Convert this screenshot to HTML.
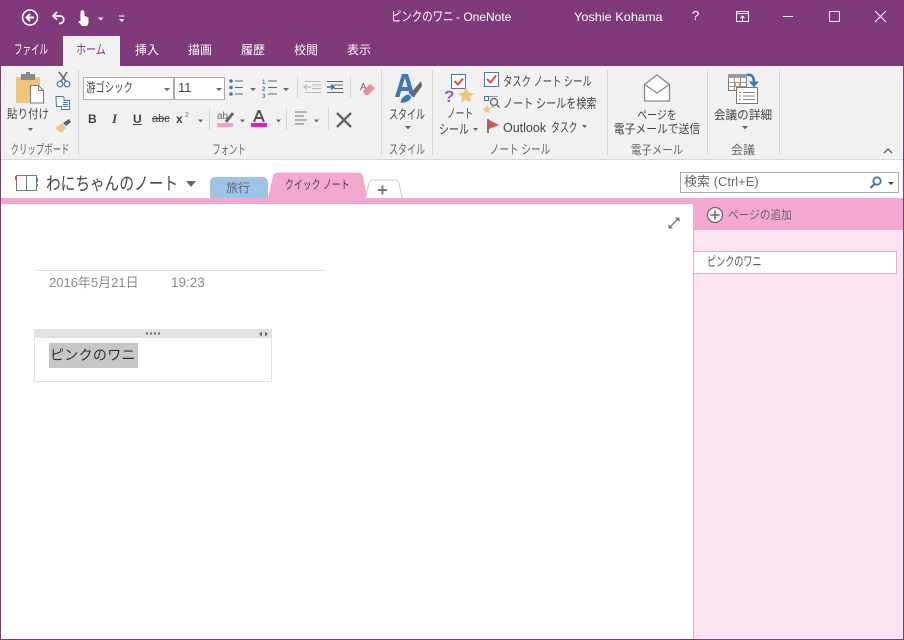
<!DOCTYPE html>
<html lang="ja"><head><meta charset="utf-8"><title>ピンクのワニ - OneNote</title>
<style>
html,body{margin:0;padding:0}
body{width:904px;height:640px;position:relative;overflow:hidden;background:#fff;font-family:"Liberation Sans","Noto Sans CJK JP",sans-serif;font-size:12px;color:#444}
.a,.t,svg{position:absolute}
.t{white-space:nowrap;line-height:16px;transform-origin:0 50%;transform:scaleX(var(--s,1))}
.c{transform-origin:50% 50%;transform:translateX(-50%) scaleX(var(--s,1))}
.w{color:#fff}
.g{color:#666}
.sep{position:absolute;width:1px;background:#d4d4d4}
.box{position:absolute;background:#fff;border:1px solid #ababab;box-sizing:border-box}
</style></head><body>
<div class="a" style="left:0;top:0;width:904px;height:66px;background:#80397b"></div>
<div class="a" style="left:1px;top:66px;width:902px;height:93px;background:#f1f1f1"></div>
<div class="a" style="left:1px;top:159px;width:902px;height:1px;background:#d6d6d6"></div>
<div class="a" style="left:63px;top:36px;width:57px;height:30px;background:#f1f1f1"></div>

<!-- QAT -->
<svg style="left:20px;top:8px" width="110" height="20" fill="none" stroke="#fff">
<circle cx="10" cy="9.500" r="7.500" stroke-width="1.500"/><path d="M14 9.500H6.500M10 6 6.500 9.500 10 13" stroke-width="2"/>
<path d="M37 4 33 8l4 3.500M33.500 8H40c5 0 5 7 0 7.500h-1" stroke-width="1.700"/>
<path d="M60.500 11V4.500c0-3 4-3 4 0V8l4 1.500V15l-1.500 3H62l-4-4.500 2.500-.5z" fill="#fff" stroke="none"/>
<path d="M78 9.500h5.500l-2.700 3zM99 11h5.500l-2.700 3z" fill="#fff" stroke="none"/><path d="M99 8h5.500" stroke-width="1"/>
</svg>
<div class="t w" style="left:391px;top:9px;font-size:13px;--s:.8">ピンクのワニ</div>
<div class="t w" style="left:456px;top:9px;font-size:12px">- OneNote</div>
<div class="t w" style="left:574px;top:9px;--s:1.06">Yoshie Kohama</div>
<div class="t w" style="left:692px;top:8px;font-size:13px">?</div>
<svg style="left:730px;top:8px" width="160" height="20" fill="none" stroke="#fff" stroke-width="1">
<path d="M6.500 3.500h12v10h-12zM6.500 5.500h12M12.500 13V8M10.500 10l2-2 2 2"/>
<path d="M53 8.500h10"/><path d="M99.500 3.500h10v10h-10z"/><path d="M145 3l11 11M156 3 145 14"/>
</svg>

<!-- Tabs -->
<div class="t w" style="left:14px;top:42px;font-size:13px;--s:.655">ファイル</div>
<div class="t" style="left:76px;top:42px;color:#80397b;font-size:13px;--s:.77">ホーム</div>
<div class="t w" style="left:135px;top:42px">挿入</div>
<div class="t w" style="left:188px;top:42px">描画</div>
<div class="t w" style="left:241px;top:42px">履歴</div>
<div class="t w" style="left:294px;top:42px">校閲</div>
<div class="t w" style="left:347px;top:42px">表示</div>

<!-- Separators -->
<div class="sep" style="left:78px;top:70px;height:85px"></div>
<div class="sep" style="left:381px;top:70px;height:85px"></div>
<div class="sep" style="left:432px;top:70px;height:85px"></div>
<div class="sep" style="left:607px;top:70px;height:85px"></div>
<div class="sep" style="left:707px;top:70px;height:85px"></div>
<div class="sep" style="left:779px;top:70px;height:85px"></div>
<div class="sep" style="left:297px;top:76px;height:22px"></div>
<div class="sep" style="left:350px;top:76px;height:22px"></div>
<div class="sep" style="left:209px;top:108px;height:22px"></div>
<div class="sep" style="left:286px;top:108px;height:22px"></div>
<div class="sep" style="left:328px;top:108px;height:22px"></div>

<!-- Clipboard -->
<svg style="left:0;top:66px" width="80" height="70">
<rect x="16" y="11" width="24" height="26" rx="1.500" fill="#efc67c"/>
<rect x="21" y="8" width="14" height="6" fill="#8a8a8a"/><rect x="26" y="6" width="4" height="4" fill="#8a8a8a"/>
<path d="M30.500 19.500h8l5 5v12.500h-13z" fill="#fff" stroke="#7a7a7a"/><path d="M38.500 19.500v5h5" fill="none" stroke="#7a7a7a"/>
<path d="M28 62h5l-2.500 3z" fill="#666"/>
<g fill="none" stroke="#4e86bd" stroke-width="1.300"><circle cx="60" cy="18" r="2.800"/><circle cx="67" cy="18" r="2.800"/></g>
<path d="M61 15.500 67 6M66 15.500 59 6" stroke="#666" stroke-width="1.500"/>
<path d="M56 30.500h7l1 1v3h5.500v9h-8v-3h-5z" fill="#fff" stroke="#4a7aa8"/><path d="M63 36.500h5M63 38.500h5M63 40.500h5" stroke="#4a7aa8"/>
<path d="M55 62l7-5 4 5-5 5z" fill="#efc67c"/><path d="M63 57l6-4 2 3-5 4z" fill="#5f5f5f"/>
</svg>
<div class="t c" style="left:28px;top:106px;--s:.875">貼り付け</div>
<div class="t c g" style="left:40px;top:142px;font-size:13px;--s:.645">クリップボード</div>

<!-- Font -->
<div class="box" style="left:83px;top:77px;width:91px;height:23px"></div>
<div class="box" style="left:174px;top:77px;width:51px;height:23px"></div>
<div class="t" style="left:86px;top:80px;font-size:13px;--s:.72">游ゴシック</div>
<div class="t" style="left:178px;top:80px;font-size:13px">11</div>
<svg style="left:83px;top:70px" width="300" height="66">
<path d="M81 18h6l-3 3zM133 18h6l-3 3zM167 18h6l-3 3zM200 18h6l-3 3zM115 49.500h5l-2.500 3zM157 49.500h5l-2.500 3zM193 49.500h5l-2.500 3zM231 49.500h5l-2.500 3z" fill="#666"/>
<g fill="#3f78b3"><circle cx="148" cy="11" r="1.800"/><circle cx="148" cy="17.500" r="1.800"/><circle cx="148" cy="24" r="1.800"/></g>
<path d="M152 11h8M152 17.500h8M152 24h8M185 11h9M185 17.500h9M185 24h9" stroke="#666"/>
<text x="179" y="14" font-size="6" font-weight="bold" fill="#3f78b3">1</text><text x="179" y="21" font-size="6" font-weight="bold" fill="#3f78b3">2</text><text x="179" y="28" font-size="6" font-weight="bold" fill="#3f78b3">3</text>
<path d="M222 11.500h16M229 15h9M229 18.500h9M222 22.500h16" stroke="#bbb"/><path d="M228 17h-6M224 14.500l-3 2.500 3 2.500" fill="none" stroke="#bbb" stroke-width="1.300"/>
<path d="M244 11.500h16M251 15h9M251 18.500h9M244 22.500h16" stroke="#666"/><path d="M244 17h6M248 14.500l3 2.500-3 2.500" fill="none" stroke="#2e6fb0" stroke-width="1.500"/>
<text x="277" y="20" font-size="10" fill="#666">A</text>
<path d="M280 21l7-7 5 4-7 7h-3z" fill="#ed8a9a"/>
<text x="134" y="49" font-size="10" fill="#666">ab</text>
<path d="M143 52l7-9" stroke="#666" stroke-width="3"/>
<rect x="134" y="53" width="16" height="4" fill="#f4a0cf"/>
<rect x="168" y="53" width="16" height="4" fill="#f00fd2"/>
<path d="M171 52 175.500 41h1L181 52M172.500 48h7" fill="none" stroke="#555" stroke-width="2"/>
<path d="M212 42h12M212 46h9M212 50h12M212 54h9" stroke="#777"/>
<path d="M254 43l14 14M268 43 254 57" stroke="#666" stroke-width="2.500"/>
</svg>
<div class="t" style="left:88px;top:111px;font-weight:bold">B</div>
<div class="t" style="left:112px;top:111px;font-style:italic;font-family:'Liberation Serif',serif;font-weight:bold;font-size:13px">I</div>
<div class="t" style="left:133px;top:111px;font-weight:bold;text-decoration:underline">U</div>
<div class="t" style="left:152px;top:111px;font-size:11px;text-decoration:line-through">abc</div>
<div class="t" style="left:176px;top:111px;font-weight:bold">x</div>
<div class="t" style="left:185px;top:108px;font-size:7px;color:#3f78b3">2</div>
<div class="t c g" style="left:229px;top:142px;font-size:13px;--s:.64">フォント</div>

<!-- Style -->
<svg style="left:385px;top:70px" width="45" height="70">
<path d="M10 27 17 4h6l7 23h-5l-1.500-6h-7.500L14.500 27zM17 17h5.500L20 8z" fill="#3f78b3" fill-rule="evenodd"/>
<path d="M25 24 36 11l1 5-8 11z" fill="#666"/>
<path d="M15 33c0-5 5-9 9-9l3 3c-1 4-6 7-12 6z" fill="#3f78b3" stroke="#f1f1f1"/>
</svg>
<div class="t c" style="left:407px;top:107px;font-size:13px;--s:.69">スタイル</div>
<svg style="left:404px;top:125px" width="8" height="6"><path d="M1 1h6L4 4.500z" fill="#666"/></svg>
<div class="t c g" style="left:407px;top:142px;font-size:13px;--s:.69">スタイル</div>

<!-- Note tags -->
<svg style="left:440px;top:70px" width="50" height="38" fill="none">
<rect x="11.500" y="4.500" width="14" height="14" stroke="#3f78b3" fill="#fff"/>
<path d="M14.500 11l3.500 3.500 5-6" stroke="#d9553c" stroke-width="2"/>
<text x="4" y="32" font-size="17" font-weight="bold" fill="#a05cc0" stroke="none" font-family="Liberation Sans">?</text>
<path d="M26 17l2.500 5.500 5.500.7-4 3.800 1 5.500-5-2.800-5 2.800 1-5.500-4-3.800 5.500-.7z" fill="#efc67c"/>
</svg>
<div class="t c" style="left:460px;top:106px;font-size:13px;--s:.665">ノート</div>
<div class="t" style="left:439px;top:122px;font-size:13px;--s:.77">シール</div>
<svg style="left:472px;top:127px" width="8" height="6"><path d="M1 1h5L3.500 4z" fill="#666"/></svg>
<svg style="left:482px;top:70px" width="22" height="68" fill="none">
<rect x="2.500" y="2.500" width="14" height="14" stroke="#3f78b3" fill="#fff"/><path d="M5 9l3.500 3.500 5.500-7" stroke="#d9553c" stroke-width="2"/>
<rect x="2.500" y="26.500" width="4" height="4" stroke="#3f78b3"/>
<path d="M7 26.500h9M9 37h3" stroke="#999"/><circle cx="12" cy="32" r="3.500" stroke="#666" stroke-width="1.300"/><path d="M14.500 34.500l3 3" stroke="#666" stroke-width="1.500"/>
<path d="M5 35l1.500 3 3 .3-2.300 2 .7 3-2.900-1.500-2.900 1.500.7-3-2.300-2 3-.3z" fill="#efc67c"/>
<rect x="5" y="49" width="2" height="14" fill="#777"/><path d="M7 50l10 5-10 4z" fill="#d9553c"/>
</svg>
<div class="t" style="left:503px;top:74px;font-size:13px;--s:.715">タスク ノート シール</div>
<div class="t" style="left:503px;top:96px;font-size:13px;--s:.775">ノート シールを検索</div>
<div class="t" style="left:503px;top:120px;font-size:12.500px">Outlook</div>
<div class="t" style="left:551px;top:120px;font-size:13px;--s:.68">タスク</div>
<svg style="left:581px;top:124px" width="8" height="6"><path d="M1 1h5L3.500 4z" fill="#666"/></svg>
<div class="t c g" style="left:520px;top:142px;font-size:13px;--s:.74">ノート シール</div>

<!-- Email -->
<svg style="left:640px;top:72px" width="36" height="32" fill="none" stroke="#8a8a8a" stroke-width="1.300">
<path d="M4.500 12.500 17 3l12.500 9.500v16.500h-25z" fill="#fff"/><path d="M4.500 12.500 17 21l12.500-8.500"/>
</svg>
<div class="t c" style="left:657px;top:107px;--s:.83">ページを</div>
<div class="t c" style="left:657px;top:121px;--s:.9">電子メールで送信</div>
<div class="t c g" style="left:657px;top:142px;--s:.87">電子メール</div>

<!-- Meeting -->
<svg style="left:726px;top:72px" width="38" height="34" fill="none">
<rect x="2.500" y="2.500" width="18" height="16" fill="#fff" stroke="#777"/><rect x="2" y="2" width="19" height="4" fill="#999"/>
<path d="M2.500 10.500h18M2.500 14.500h18M8.500 6v12M14.500 6v12" stroke="#999"/><rect x="9.500" y="10.500" width="4" height="4" stroke="#e88a30" fill="#fff"/>
<rect x="10.500" y="15.500" width="21" height="16" fill="#fff" stroke="#777"/><path d="M17 20.500h12M17 24h12M17 27.500h12M13 20.500h2M13 24h2M13 27.500h2" stroke="#888"/>
<path d="M21 3c5-1 7 2 7 8" stroke="#3f78b3" stroke-width="2.500"/><path d="M23 9.500l5 6 5-6z" fill="#3f78b3"/>
</svg>
<div class="t c" style="left:743px;top:107px;--s:.97">会議の詳細</div>
<svg style="left:741px;top:125px" width="8" height="6"><path d="M1 1h6L4 4.500z" fill="#666"/></svg>
<div class="t c g" style="left:743px;top:142px">会議</div>
<svg style="left:882px;top:146px" width="12" height="9" fill="none"><path d="M2 7l4-4 4 4" stroke="#666" stroke-width="1.500"/></svg>

<!-- Notebook bar -->
<svg style="left:14px;top:172px" width="26" height="22" fill="none">
<path d="M2.500 3.500h10v15h-10zM12.500 3.500h10v15h-10z" stroke="#777" fill="#fff"/>
<rect x="1" y="4" width="2" height="4" fill="#d9553c"/><rect x="22" y="6" width="2" height="4" fill="#3f78b3"/><rect x="22" y="12" width="2" height="3" fill="#5a9a70"/>
</svg>
<div class="t" style="left:46px;top:173px;font-size:18px;line-height:22px;color:#444;--s:.815">わにちゃんのノート</div>
<svg style="left:185px;top:180px" width="12" height="8"><path d="M1 1h10L6 7z" fill="#666"/></svg>

<div class="a" style="left:210px;top:177px;width:58px;height:21px;background:#9dc3e6;border-radius:5px 5px 0 0"></div>
<div class="t g" style="left:226px;top:180px">旅行</div>
<svg style="left:266px;top:172px" width="140" height="28">
<path d="M2 26 7 4Q8 .5 12 .5H92Q96 .5 97 4L101 26z" fill="#f4a7cf"/>
<path d="M99.500 26 103 11Q104 8 107 8H129Q132 8 133 11L136 26" fill="#fff" stroke="#c9c9c9"/>
<path d="M112 18h9M116.500 13.500v9" stroke="#777" stroke-width="2"/>
</svg>
<div class="t" style="left:285px;top:177px;font-size:12.500px;--s:.71">クイック ノート</div>

<div class="box" style="left:680px;top:172px;width:219px;height:21px"></div>
<div class="t" style="left:684px;top:174px;color:#666;font-size:13px">検索 (Ctrl+E)</div>
<svg style="left:868px;top:175px" width="28" height="16" fill="none">
<circle cx="9" cy="6" r="3.700" stroke="#3f78b3" stroke-width="1.800"/><path d="M6.500 9 2.500 13" stroke="#3f78b3" stroke-width="2.200"/><path d="M20 7h6l-3 3z" fill="#444"/>
</svg>

<!-- Content -->
<div class="a" style="left:0;top:198px;width:904px;height:6px;background:#f4a7cf"></div>
<div class="a" style="left:693px;top:198px;width:210px;height:32px;background:#f4a7cf"></div>
<div class="a" style="left:693px;top:230px;width:210px;height:409px;background:#fbe5f3;border-left:1px solid #e8a8cc;box-sizing:border-box"></div>
<svg style="left:706px;top:206px" width="18" height="18" fill="none">
<circle cx="9" cy="9" r="7.500" fill="#f8f0f5" stroke="#666" stroke-width="1.200"/><path d="M9 4.500v9M4.500 9h9" stroke="#666" stroke-width="1.500"/>
</svg>
<div class="t" style="left:728px;top:207px;color:#666;--s:.89">ページの追加</div>
<div class="a" style="left:693px;top:251px;width:204px;height:23px;background:#fff;border:1px solid #f0a8d0;box-sizing:border-box"></div>
<div class="t" style="left:707px;top:254px;color:#555;font-size:13px;--s:.7">ピンクのワニ</div>

<svg style="left:667px;top:216px" width="14" height="14" fill="none" stroke="#777" stroke-width="1.300">
<path d="M2.500 11.500l9-9"/><path d="M8 1.500h4.500V6zM1.500 8v4.500H6z" fill="#777" stroke="none"/>
</svg>

<div class="a" style="left:37px;top:270px;width:288px;height:1px;background:#e1e1e1"></div>
<div class="t" style="left:49px;top:275px;color:#8a8a8a;font-size:13px">2016年5月21日</div>
<div class="t" style="left:171px;top:275px;color:#8a8a8a;font-size:13.500px">19:23</div>

<div class="a" style="left:34px;top:329px;width:238px;height:53px;border:1px solid #e1e1e1;box-sizing:border-box"></div>
<div class="a" style="left:34px;top:329px;width:238px;height:9px;background:#e1e1e1"></div>
<svg style="left:145px;top:331px" width="126" height="6">
<path d="M1 1.500h2v2H1zM5 1.500h2v2H5zM9 1.500h2v2H9zM13 1.500h2v2h-2z" fill="#666"/>
<path d="M117 .5v5l-3-2.500zM120 .5v5l3-2.500z" fill="#666"/>
</svg>
<div class="a" style="left:49px;top:343px;width:89px;height:25px;background:#c6c6c6"></div>
<div class="t" style="left:50px;top:346px;font-size:14px;line-height:18px;color:#333;letter-spacing:.3px">ピンクのワニ</div>

<!-- Window border -->
<div class="a" style="left:0;top:66px;width:1px;height:574px;background:#80397b"></div>
<div class="a" style="left:903px;top:66px;width:1px;height:574px;background:#80397b"></div>
<div class="a" style="left:0;top:639px;width:904px;height:1px;background:#80397b"></div>
</body></html>
